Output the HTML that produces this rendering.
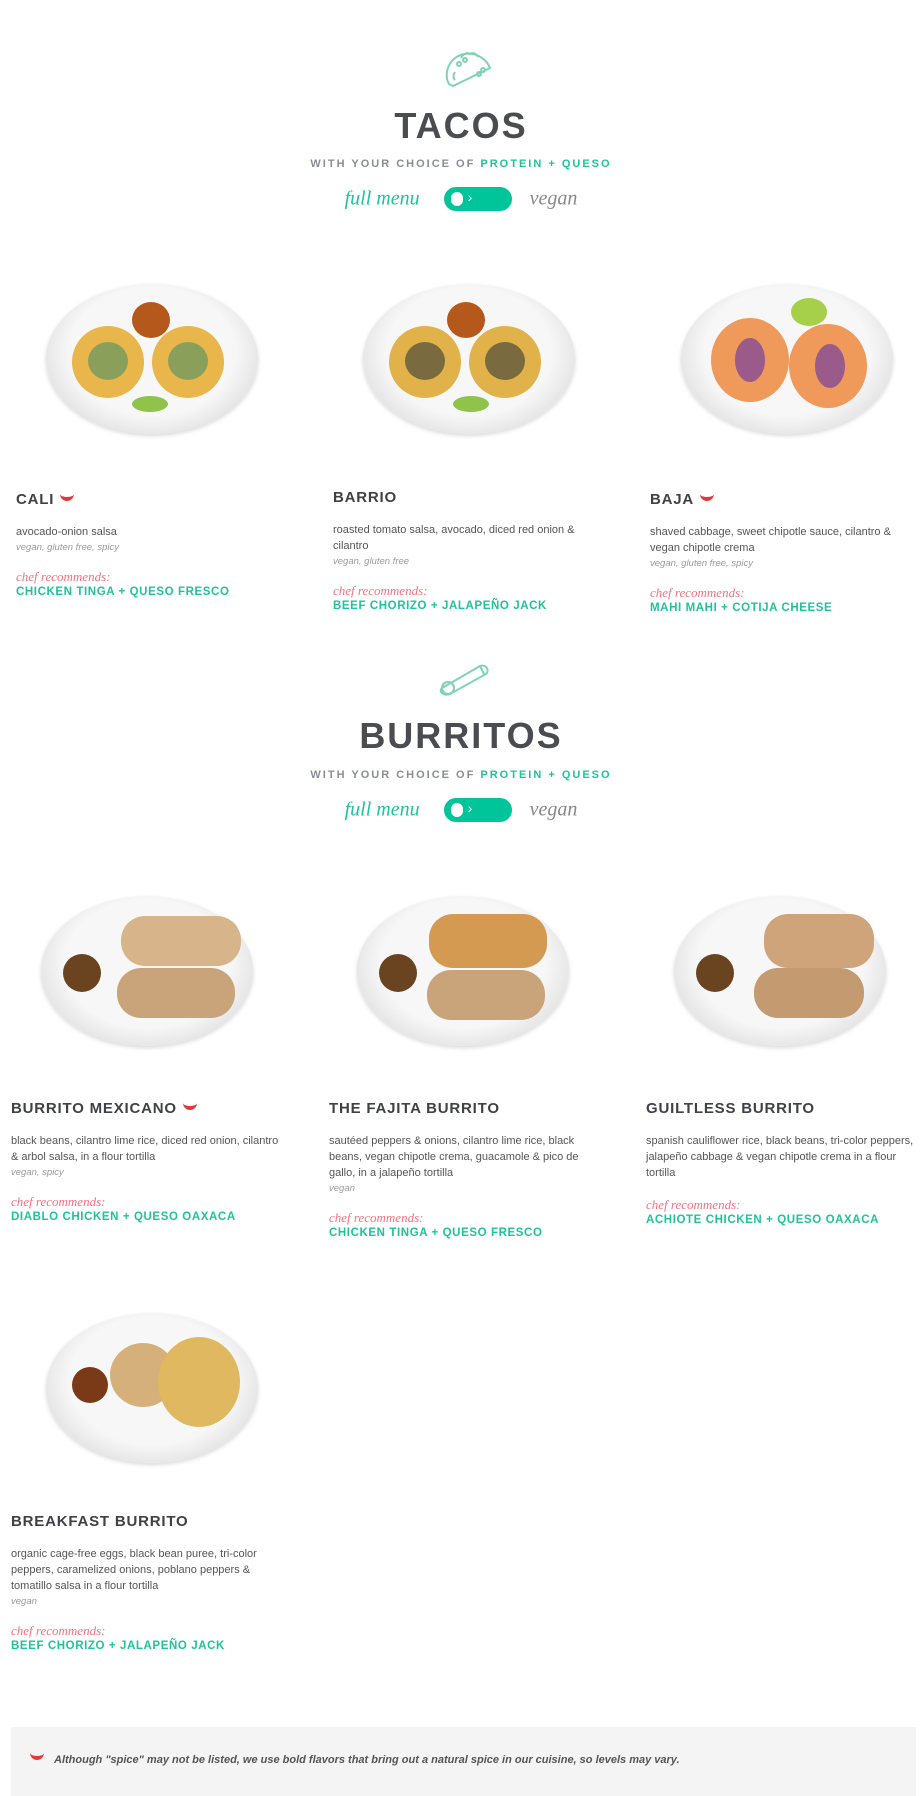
<!DOCTYPE html>
<html><head><meta charset="utf-8"><style>
*{margin:0;padding:0;box-sizing:border-box}
body{width:922px;height:1796px;background:#fff;position:relative;font-family:"Liberation Sans",sans-serif;color:#444;overflow:hidden}
.abs{position:absolute}
.h1{position:absolute;left:0;width:922px;text-align:center;font-weight:bold;font-size:36px;letter-spacing:2px;color:#4a4c52}
.sub{position:absolute;left:0;width:922px;text-align:center;font-size:11px;letter-spacing:2px;color:#8a8d95;font-weight:bold}
.sub b{color:#1fc39a}
.tog{position:absolute;left:0;width:922px;text-align:center;height:26px}
.tog .fm{font-family:"Liberation Serif",serif;font-style:italic;font-size:20px;color:#1fc39a;vertical-align:middle}
.tog .vg{font-family:"Liberation Serif",serif;font-style:italic;font-size:20px;color:#888;vertical-align:middle}
.sw{display:inline-block;width:68px;height:24px;border-radius:12px;background:#00c49a;vertical-align:middle;margin:0 18px 0 24px;position:relative}
.sw:before{content:"";position:absolute;left:7px;top:5px;width:12px;height:14px;border-radius:7px;background:#fff}
.sw:after{content:"›";position:absolute;left:24px;top:2px;color:#fff;font-size:14px}
.plate{position:absolute;width:212px;height:150px}
.plate .p{position:absolute;left:0;top:0;width:212px;height:150px;border-radius:50%;background:radial-gradient(ellipse at 50% 45%,#f7f7f7 55%,#e6e6e6 72%,#f2f2f2 80%,#dcdcdc 100%);box-shadow:0 2px 4px rgba(0,0,0,.15)}
.c{position:absolute;border-radius:50%}
.item{position:absolute;width:272px}
.item .t{font-weight:bold;font-size:15px;letter-spacing:.8px;color:#3f4146;height:20px}
.item .d{font-size:11px;line-height:16px;color:#555;margin-top:13px}
.item .g{font-size:9.5px;font-style:italic;color:#9a9a9a;margin-top:2px}
.item .cr{font-family:"Liberation Serif",serif;font-style:italic;font-size:13px;color:#f4717f;margin-top:16px}
.item .pq{font-weight:bold;font-size:11.5px;letter-spacing:.6px;color:#1fc39a;margin-top:1px}
.chili{display:inline-block;width:14px;height:7px;border-bottom:4px solid #e23a3a;border-radius:0 0 10px 10px;margin-left:6px;vertical-align:3px}
</style></head><body>

<svg class="abs" style="left:443px;top:48px" width="52" height="40" viewBox="0 0 52 40" fill="none" stroke="#7fd3b4" stroke-width="2"><path d="M6 36 C0 26 6 8 22 6 C34 4 44 12 47 20 L10 38 Z"/><path d="M18 10c2-4 6-6 9-4c3-2 7 0 8 3"/><circle cx="16" cy="16" r="2"/><circle cx="22" cy="12" r="2"/><circle cx="40" cy="22" r="2"/><circle cx="36" cy="26" r="2"/><path d="M12 24c-2 3-2 6 0 8"/></svg>
<div class="h1" style="top:105px">TACOS</div>
<div class="sub" style="top:158px">WITH YOUR CHOICE OF <b>PROTEIN + QUESO</b></div>
<div class="tog" style="top:187px"><span class="fm">full menu</span><span class="sw"></span><span class="vg">vegan</span></div>

<div class="plate" style="left:46px;top:284px"><div class="p"></div><div class="c" style="left:26px;top:42px;width:72px;height:72px;background:#e8b64a"></div><div class="c" style="left:106px;top:42px;width:72px;height:72px;background:#e8b64a"></div><div class="c" style="left:42px;top:58px;width:40px;height:38px;background:#8aa05a"></div><div class="c" style="left:122px;top:58px;width:40px;height:38px;background:#8aa05a"></div><div class="c" style="left:86px;top:18px;width:38px;height:36px;background:#b5581c"></div><div class="c" style="left:86px;top:112px;width:36px;height:16px;background:#8fc34a"></div></div>
<div class="plate" style="left:363px;top:284px"><div class="p"></div><div class="c" style="left:26px;top:42px;width:72px;height:72px;background:#e2b24a"></div><div class="c" style="left:106px;top:42px;width:72px;height:72px;background:#e2b24a"></div><div class="c" style="left:42px;top:58px;width:40px;height:38px;background:#7a6a40"></div><div class="c" style="left:122px;top:58px;width:40px;height:38px;background:#7a6a40"></div><div class="c" style="left:84px;top:18px;width:38px;height:36px;background:#b5581c"></div><div class="c" style="left:90px;top:112px;width:36px;height:16px;background:#8fc34a"></div></div>
<div class="plate" style="left:681px;top:284px"><div class="p"></div><div class="c" style="left:30px;top:34px;width:78px;height:84px;background:#ef9a5a"></div><div class="c" style="left:108px;top:40px;width:78px;height:84px;background:#ef9a5a"></div><div class="c" style="left:54px;top:54px;width:30px;height:44px;background:#9a5a8a"></div><div class="c" style="left:134px;top:60px;width:30px;height:44px;background:#9a5a8a"></div><div class="c" style="left:110px;top:14px;width:36px;height:28px;background:#a6cf4a"></div></div>

<div class="item" style="left:16px;top:491px"><div class="t">CALI<span class="chili"></span></div><div class="d">avocado-onion salsa</div><div class="g">vegan, gluten free, spicy</div><div class="cr">chef recommends:</div><div class="pq">CHICKEN TINGA + QUESO FRESCO</div></div>
<div class="item" style="left:333px;top:489px"><div class="t">BARRIO</div><div class="d">roasted tomato salsa, avocado, diced red onion &amp; cilantro</div><div class="g">vegan, gluten free</div><div class="cr">chef recommends:</div><div class="pq">BEEF CHORIZO + JALAPEÑO JACK</div></div>
<div class="item" style="left:650px;top:491px"><div class="t">BAJA<span class="chili"></span></div><div class="d">shaved cabbage, sweet chipotle sauce, cilantro &amp; vegan chipotle crema</div><div class="g">vegan, gluten free, spicy</div><div class="cr">chef recommends:</div><div class="pq">MAHI MAHI + COTIJA CHEESE</div></div>

<svg class="abs" style="left:436px;top:660px" width="56" height="36" viewBox="0 0 56 36" fill="none" stroke="#7fd3b4" stroke-width="2"><path d="M6 28 L44 6 C50 4 54 10 50 14 L14 34 C8 36 2 32 6 28 Z"/><circle cx="12" cy="28" r="6"/><path d="M44 6l4 8"/></svg>
<div class="h1" style="top:715px">BURRITOS</div>
<div class="sub" style="top:769px">WITH YOUR CHOICE OF <b>PROTEIN + QUESO</b></div>
<div class="tog" style="top:798px"><span class="fm">full menu</span><span class="sw"></span><span class="vg">vegan</span></div>

<div class="plate" style="left:41px;top:896px"><div class="p"></div><div class="c" style="left:22px;top:58px;width:38px;height:38px;background:#6a4320"></div><div class="c" style="left:80px;top:20px;width:120px;height:50px;border-radius:24px;background:#d8b48a"></div><div class="c" style="left:76px;top:72px;width:118px;height:50px;border-radius:24px;background:#c9a47a"></div></div>
<div class="plate" style="left:357px;top:896px"><div class="p"></div><div class="c" style="left:22px;top:58px;width:38px;height:38px;background:#6a4320"></div><div class="c" style="left:72px;top:18px;width:118px;height:54px;border-radius:24px;background:#d49a52"></div><div class="c" style="left:70px;top:74px;width:118px;height:50px;border-radius:24px;background:#c9a47a"></div></div>
<div class="plate" style="left:674px;top:896px"><div class="p"></div><div class="c" style="left:22px;top:58px;width:38px;height:38px;background:#6a4320"></div><div class="c" style="left:90px;top:18px;width:110px;height:54px;border-radius:24px;background:#cfa47a"></div><div class="c" style="left:80px;top:72px;width:110px;height:50px;border-radius:24px;background:#c49a70"></div></div>

<div class="item" style="left:11px;top:1100px"><div class="t">BURRITO MEXICANO<span class="chili"></span></div><div class="d">black beans, cilantro lime rice, diced red onion, cilantro &amp; arbol salsa, in a flour tortilla</div><div class="g">vegan, spicy</div><div class="cr">chef recommends:</div><div class="pq">DIABLO CHICKEN + QUESO OAXACA</div></div>
<div class="item" style="left:329px;top:1100px"><div class="t">THE FAJITA BURRITO</div><div class="d">sautéed peppers &amp; onions, cilantro lime rice, black beans, vegan chipotle crema, guacamole &amp; pico de gallo, in a jalapeño tortilla</div><div class="g">vegan</div><div class="cr">chef recommends:</div><div class="pq">CHICKEN TINGA + QUESO FRESCO</div></div>
<div class="item" style="left:646px;top:1100px"><div class="t">GUILTLESS BURRITO</div><div class="d">spanish cauliflower rice, black beans, tri-color peppers, jalapeño cabbage &amp; vegan chipotle crema in a flour tortilla</div><div class="cr">chef recommends:</div><div class="pq">ACHIOTE CHICKEN + QUESO OAXACA</div></div>

<div class="plate" style="left:46px;top:1313px"><div class="p"></div><div class="c" style="left:26px;top:54px;width:36px;height:36px;background:#7a3a18"></div><div class="c" style="left:64px;top:30px;width:66px;height:64px;background:#d6b07a"></div><div class="c" style="left:112px;top:24px;width:82px;height:90px;background:#e0b860"></div></div>

<div class="item" style="left:11px;top:1513px"><div class="t">BREAKFAST BURRITO</div><div class="d">organic cage-free eggs, black bean puree, tri-color peppers, caramelized onions, poblano peppers &amp; tomatillo salsa in a flour tortilla</div><div class="g">vegan</div><div class="cr">chef recommends:</div><div class="pq">BEEF CHORIZO + JALAPEÑO JACK</div></div>

<div class="abs" style="left:11px;top:1727px;width:905px;height:69px;background:#f4f4f4"></div>
<div class="abs" style="left:30px;top:1753px;font-size:11px;font-style:italic;font-weight:bold;color:#555"><span class="chili" style="margin:0 10px 0 0"></span>Although "spice" may not be listed, we use bold flavors that bring out a natural spice in our cuisine, so levels may vary.</div>
</body></html>
